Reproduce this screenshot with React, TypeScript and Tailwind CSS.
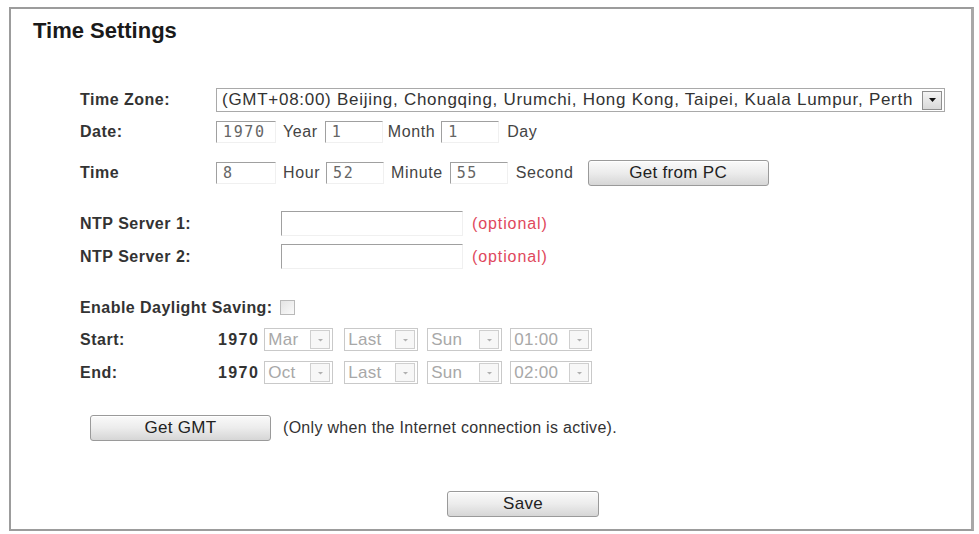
import React from "react";

const font = "font-['Liberation_Sans',Arial,sans-serif]";

function TextBox({ value, w }: { value: string; w: string }) {
  return (
    <div
      className={`${w} h-[22px] border border-t-[#a0a0a0] border-l-[#a0a0a0] border-r-[#f0f0f0] border-b-[#f0f0f0] bg-white flex items-center pl-[6px] font-['DejaVu_Sans_Mono',monospace] text-[15px] tracking-[1.6px] text-[#666]`}
    >
      {value}
    </div>
  );
}

function Button({ label, w }: { label: string; w: string }) {
  return (
    <div
      className={`${w} h-[26px] rounded-[3px] border border-[#9a9a9a] bg-gradient-to-b from-[#fafafa] via-[#ececec] to-[#d6d6d6] flex items-center justify-center text-[17px] tracking-[0.3px] text-[#222] shadow-[inset_0_1px_0_#fff]`}
    >
      {label}
    </div>
  );
}

function ArrowBox({ dim }: { dim?: boolean }) {
  return (
    <div
      className={`w-[20px] h-[19px] border ${dim ? "border-[#cfcfcf] bg-[#f7f7f7]" : "border-[#8f8f8f] bg-gradient-to-b from-[#f4f4f4] to-[#d9d9d9]"} flex items-center justify-center`}
    >
      <svg width="9" height="6" viewBox="0 0 9 6">
        {dim ? (
          <path d="M2 2 L7 2 L4.5 4.5 Z" fill="#b0b0b0" />
        ) : (
          <path d="M1 1 L8 1 L4.5 5 Z" fill="#111" />
        )}
      </svg>
    </div>
  );
}

function DimSelect({ value, w }: { value: string; w: string }) {
  return (
    <div
      className={`${w} h-[23px] border border-[#c9c9c9] bg-white flex items-center justify-between pl-[3px] pr-[2px] text-[17px] tracking-[0.3px] text-[#a8a8a8]`}
    >
      <span>{value}</span>
      <ArrowBox dim />
    </div>
  );
}

function Label({ children, w }: { children: React.ReactNode; w: string }) {
  return <div className={`${w} shrink-0 font-bold text-[16px] text-[#333] tracking-[0.5px]`}>{children}</div>;
}

function Unit({ children }: { children: React.ReactNode }) {
  return <span className="text-[16px] tracking-[0.6px] text-[#444]">{children}</span>;
}

function Gap({ w }: { w: string }) {
  return <div className={`${w} shrink-0`} />;
}

export default function App() {
  return (
    <div className={`w-[979px] h-[534px] bg-white pt-[7px] pl-[9px] ${font}`}>
      <div className="w-[965px] h-[524px] border-2 border-[#9c9c9c] border-r-[3px] border-r-[#a8a8a8] flex flex-col">
        <h1 className="ml-[22px] mt-[9px] text-[22px] leading-[26px] font-bold text-[#1a1a1a]">Time Settings</h1>

        <div className="pl-[69px] flex flex-col">
          {/* time zone */}
          <div className="mt-[44px] h-[24px] flex items-center">
            <Label w="w-[136px]">Time Zone:</Label>
            <div className="w-[729px] h-[24px] border border-[#a9a9a9] bg-white flex items-center justify-between pl-[5px] pr-[2px] text-[17px] tracking-[0.72px] text-[#333]">
              <span className="whitespace-nowrap">(GMT+08:00) Beijing, Chongqing, Urumchi, Hong Kong, Taipei, Kuala Lumpur, Perth</span>
              <ArrowBox />
            </div>
          </div>

          {/* date */}
          <div className="mt-[9px] h-[22px] flex items-center">
            <Label w="w-[136px]">Date:</Label>
            <TextBox value="1970" w="w-[60px]" />
            <Gap w="w-[7px]" />
            <Unit>Year</Unit>
            <Gap w="w-[7px]" />
            <TextBox value="1" w="w-[58px]" />
            <Gap w="w-[5px]" />
            <Unit>Month</Unit>
            <Gap w="w-[6px]" />
            <TextBox value="1" w="w-[58px]" />
            <Gap w="w-[8px]" />
            <Unit>Day</Unit>
          </div>

          {/* time */}
          <div className="mt-[17px] h-[26px] flex items-center">
            <Label w="w-[136px]">Time</Label>
            <TextBox value="8" w="w-[60px]" />
            <Gap w="w-[7px]" />
            <Unit>Hour</Unit>
            <Gap w="w-[6px]" />
            <TextBox value="52" w="w-[58px]" />
            <Gap w="w-[7px]" />
            <Unit>Minute</Unit>
            <Gap w="w-[7px]" />
            <TextBox value="55" w="w-[58px]" />
            <Gap w="w-[8px]" />
            <Unit>Second</Unit>
            <Gap w="w-[14px]" />
            <Button label="Get from PC" w="w-[181px]" />
          </div>

          {/* ntp servers */}
          <div className="mt-[25px] h-[25px] flex items-center">
            <Label w="w-[201px]">NTP Server 1:</Label>
            <div className="w-[182px] h-[25px] border border-t-[#a0a0a0] border-l-[#a0a0a0] border-r-[#f0f0f0] border-b-[#f0f0f0]" />
            <span className="ml-[9px] text-[16px] tracking-[0.9px] text-[#e0485c]">(optional)</span>
          </div>
          <div className="mt-[8px] h-[25px] flex items-center">
            <Label w="w-[201px]">NTP Server 2:</Label>
            <div className="w-[182px] h-[25px] border border-t-[#a0a0a0] border-l-[#a0a0a0] border-r-[#f0f0f0] border-b-[#f0f0f0]" />
            <span className="ml-[9px] text-[16px] tracking-[0.9px] text-[#e0485c]">(optional)</span>
          </div>

          {/* daylight saving */}
          <div className="mt-[31px] h-[15px] flex items-center">
            <span className="font-bold text-[16px] text-[#333] tracking-[0.45px]">Enable Daylight Saving:</span>
            <div className="ml-[7px] w-[15px] h-[15px] border border-[#b9b9b9] bg-gradient-to-br from-[#e4e4e4] to-[#fafafa]" />
          </div>

          <div className="mt-[13px] h-[23px] flex items-center">
            <Label w="w-[138px]">Start:</Label>
            <span className="font-bold text-[16px] text-[#333] tracking-[1.4px]">1970</span>
            <Gap w="w-[5px]" />
            <DimSelect value="Mar" w="w-[69px]" />
            <Gap w="w-[11px]" />
            <DimSelect value="Last" w="w-[74px]" />
            <Gap w="w-[9px]" />
            <DimSelect value="Sun" w="w-[75px]" />
            <Gap w="w-[8px]" />
            <DimSelect value="01:00" w="w-[82px]" />
          </div>

          <div className="mt-[10px] h-[23px] flex items-center">
            <Label w="w-[138px]">End:</Label>
            <span className="font-bold text-[16px] text-[#333] tracking-[1.4px]">1970</span>
            <Gap w="w-[5px]" />
            <DimSelect value="Oct" w="w-[69px]" />
            <Gap w="w-[11px]" />
            <DimSelect value="Last" w="w-[74px]" />
            <Gap w="w-[9px]" />
            <DimSelect value="Sun" w="w-[75px]" />
            <Gap w="w-[8px]" />
            <DimSelect value="02:00" w="w-[82px]" />
          </div>

          {/* gmt */}
          <div className="mt-[30px] h-[27px] flex items-center ml-[10px]">
            <Button label="Get GMT" w="w-[181px]" />
            <span className="ml-[12px] text-[16px] tracking-[0.3px] text-[#333]">(Only when the Internet connection is active).</span>
          </div>
        </div>

        {/* save */}
        <div className="mt-[50px] pl-[436px]">
          <Button label="Save" w="w-[152px]" />
        </div>
      </div>
    </div>
  );
}
